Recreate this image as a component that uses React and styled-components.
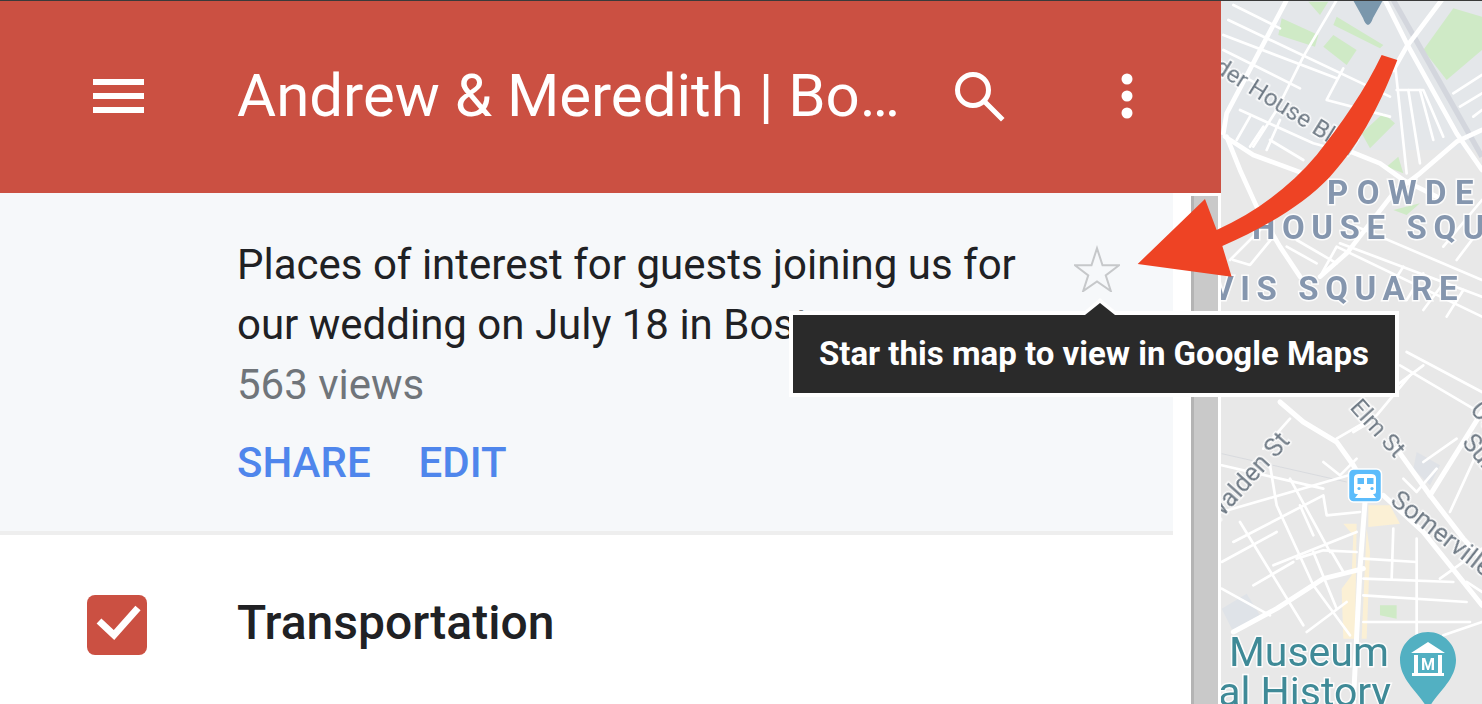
import React from 'react'
import styled, { createGlobalStyle } from 'styled-components'

const Global = createGlobalStyle`
html, body { margin: 0; padding: 0; background: #fff; }
body { font-family: Roboto, "Liberation Sans", sans-serif; overflow: hidden; }
`
const Page = styled.div`
position: relative;
width: 1482px;
height: 704px;
overflow: hidden;
display: flex;
flex-direction: column;
`
const TopLine = styled.div`
height: 1px;
background: #3a3a3a;
flex: none;
`
const Main = styled.div`
flex: 1;
display: flex;
min-height: 0;
`
const Sidebar = styled.div`
width: 1221px;
flex: none;
display: flex;
flex-direction: column;
background: #fff;
`
const Header = styled.div`
height: 192px;
flex: none;
background: #cb5042;
display: flex;
align-items: center;
color: #fff;
`
const MenuButton = styled.div`
width: 51px;
margin-left: 93px;
margin-right: 93px;
margin-top: -2px;
display: flex;
flex-direction: column;
gap: 8px;
span { display: block; height: 6px; background: #fff; }
`
const Title = styled.div`
width: 669px;
font-size: 60px;
line-height: 68px;
white-space: nowrap;
overflow: hidden;
text-overflow: ellipsis;
margin-top: -2px;
`
const SearchIcon = styled.svg`
width: 56px;
height: 56px;
margin-left: 48px;
margin-top: 4px;
flex: none;
`
const MoreIcon = styled.svg`
width: 14px;
height: 50px;
margin-left: 110px;
margin-top: -2px;
flex: none;
`
const Below = styled.div`
flex: 1;
display: flex;
min-height: 0;
`
const Content = styled.div`
width: 1173px;
flex: none;
`
const Details = styled.div`
height: 342px;
box-sizing: border-box;
padding: 42px 0 0 237px;
background: #f6f8fa;
border-bottom: 4px solid #eeeeee;
position: relative;
`
const Description = styled.div`
width: 800px;
font-size: 42px;
line-height: 60px;
color: #202124;
`
const Views = styled.div`
font-size: 42px;
line-height: 60px;
color: #70757a;
`
const Actions = styled.div`
display: flex;
gap: 48px;
margin-top: 18px;
`
const Action = styled.div`
font-size: 42px;
line-height: 60px;
font-weight: 500;
color: #4f86ec;
`
const StarIcon = styled.svg`
position: absolute;
left: 1074px;
top: 52px;
width: 46px;
height: 47px;
`
const LayerRow = styled.div`
display: flex;
align-items: center;
padding-left: 87px;
height: 180px;
`
const Check = styled.div`
width: 60px;
height: 60px;
flex: none;
border-radius: 8px;
background: #cb5042;
margin-right: 90px;
svg { display: block; }
`
const LayerName = styled.div`
font-size: 48px;
font-weight: 500;
color: #202124;
margin-top: -5px;
`
const Scrollbar = styled.div`
margin: 3px 3px 0 18px;
flex: 1;
background: #c9c9c9;
border-left: 3px solid #b4b4b4;
`
const MapPane = styled.div`
flex: 1;
background: #e8e8e8;
min-width: 0;
svg { display: block; }
`
const Blurred = styled.g`
filter: blur(.6px);
`
const ArrowOverlay = styled.svg`
position: absolute;
left: 0;
top: 0;
pointer-events: none;
`
const Tooltip = styled.div`
position: absolute;
left: 789px;
top: 311px;
width: 602px;
height: 78px;
box-sizing: content-box;
border: 4px solid #fff;
background: #2a2a2a;
color: #fff;
font-size: 33px;
font-weight: 700;
line-height: 78px;
text-align: center;
white-space: nowrap;
&::before {
  content: "";
  position: absolute;
  left: 287px;
  top: -17px;
  border: 20px solid transparent;
  border-top: 0;
  border-bottom: 17px solid #fff;
}
&::after {
  content: "";
  position: absolute;
  left: 292px;
  top: -12px;
  border: 15px solid transparent;
  border-top: 0;
  border-bottom: 12px solid #2a2a2a;
}
`
const MapLabel = styled.text`
font-family: Roboto, sans-serif;
font-size: ${p => p.$size || 25}px;
font-weight: ${p => p.$weight || 400};
letter-spacing: ${p => p.$spacing || 0}px;
fill: ${p => p.$color || '#6f7a85'};
stroke: #fff;
stroke-width: ${p => p.$halo ?? 3}px;
stroke-opacity: .85;
paint-order: stroke;
filter: blur(.3px);
`

// road traces, in 3x zoom coordinates of the upper and lower half of the map
const greens = [
  '355,5 415,5 390,45', '275,55 385,105 375,140 265,105', '440,50 580,135 570,145 430,75',
  '400,140 430,105 500,150 470,195', '700,150 790,25 876,50 876,150 770,240',
  '515,400 580,340 615,370 540,445', '590,500 625,470 640,520', '610,630 690,610 650,645'
]
const majorTop = [
  '585,0 650,130 800,400 876,510', '755,0 650,140 610,210', '290,0 110,340 100,400',
  '110,410 150,510 200,620 270,740 330,830', '105,410 190,465 340,520',
  '876,390 800,425 690,520 610,580 470,760 390,830', '470,450 570,490 640,540 740,590'
]
const minorTop = [
  '130,15 270,85', '115,60 600,290', '100,105 440,235', '100,150 330,265', '100,200 200,250',
  '440,0 340,170 260,330 190,440', '460,205 410,300 600,350', '180,350 140,420', '220,380 180,440',
  '270,360 230,450', '150,330 370,430 480,460', '240,420 340,480', '615,190 650,520', '655,270 690,490',
  '690,270 730,420', '620,270 700,270 760,410', '790,280 876,225', '810,320 876,280', '850,350 876,330',
  '120,780 210,690', '130,780 180,795 250,710', '290,740 380,790', '320,720 440,790', '390,830 440,740 876,950',
  '450,730 876,890', '500,680 876,840', '640,800 590,880', '700,820 650,900', '760,850 700,930', '820,870 770,950',
  '876,600 760,740', '876,680 800,780'
]
const majorBottom = [
  '270,150 340,210 440,270 490,340 525,400', '525,450 510,650 490,1056', '580,430 700,540 876,760',
  '620,290 720,430 820,560 876,620', '876,180 720,430', '520,650 400,680 260,770 130,840'
]
const minorBottom = [
  '300,200 220,290', '440,260 560,190 660,70', '400,330 450,370 500,320', '490,240 540,210', '650,0 876,120',
  '630,40 850,170', '620,100 700,40', '800,260 700,330', '640,380 680,420 740,350', '780,480 876,270',
  '95,340 400,410', '95,480 510,360', '130,570 400,430 410,490 510,480', '240,340 260,460 370,700 480,850',
  '300,380 420,600', '330,460 370,550', '150,510 340,820', '95,630 260,540', '250,640 500,540', '320,620 400,595 500,600',
  '370,600 440,770', '425,600 460,660', '95,710 240,790', '190,700 310,630', '350,840 470,750', '520,620 680,630',
  '520,680 790,690', '520,730 830,750', '520,810 840,810', '610,530 605,680', '680,560 680,850', '750,680 876,590',
  '830,690 876,720', '760,850 876,810'
]

const Roads = ({ list, width }) => (
  <g fill="none" stroke="#fff" strokeWidth={width} strokeLinejoin="round" strokeLinecap="round">
    {list.map(p => <polyline key={p} points={p} />)}
  </g>
)

const CityMap = () => (
  <svg width="261" height="703" viewBox="1221 1 261 703">
    <rect x="1221" y="0" width="261" height="150" fill="#e4e7ea" />
    <Blurred transform="translate(1190 0) scale(.3333)">
      {greens.map(p => <polygon key={p} points={p} fill="#cfeac6" />)}
      <polyline points="610,0 876,470" fill="none" stroke="#d3d6dd" strokeWidth="16" />
      <Roads list={minorTop} width={8} />
      <Roads list={majorTop} width={14} />
    </Blurred>
    <Blurred transform="translate(1190 352) scale(.3333)">
      <polygon points="460,515 500,515 495,860 460,860 455,710 485,670 490,550" fill="#fbf0d5" />
      <polygon points="535,460 600,460 630,515 535,525" fill="#fbf0d5" />
      <polygon points="530,530 540,600 530,860 515,860" fill="#fbf0d5" />
      <polygon points="570,760 620,760 620,800 570,790" fill="#cfeac6" />
      <polygon points="680,300 750,340 720,400 670,350" fill="#dfe2e7" />
      <polygon points="95,770 170,725 210,790 130,840" fill="#dfe3e8" />
      <line x1="95" y1="305" x2="470" y2="390" stroke="#d8dade" strokeWidth="3" />
      <Roads list={minorBottom} width={8} />
      <Roads list={majorBottom} width={15} />
    </Blurred>
    <path d="M1353 0h30l-10 18q-2 6-5 7-3-1-5-7z" fill="#7a97ac" />
    <MapLabel x="1327" y="204" $size={33} $weight={700} $spacing={8.4} $color="#8596ae">POWDER</MapLabel>
    <MapLabel x="1252" y="239" $size={33} $weight={700} $spacing={6.6} $color="#8596ae">HOUSE SQUARE</MapLabel>
    <MapLabel x="1157" y="300" $size={33} $weight={700} $spacing={6.6} $color="#8596ae">DAVIS SQUARE</MapLabel>
    <MapLabel transform="translate(1173 46) rotate(32)" $size={24}>Powder House Blvd</MapLabel>
    <MapLabel transform="translate(1216 525) rotate(-48)" $size={25}>Walden St</MapLabel>
    <MapLabel transform="translate(1349 408) rotate(48)" $size={24}>Elm St</MapLabel>
    <MapLabel transform="translate(1389 503) rotate(38)" $size={26}>Somerville Ave</MapLabel>
    <MapLabel transform="translate(1461 443) rotate(50)" $size={25}>Summer</MapLabel>
    <MapLabel transform="translate(1469 410) rotate(50)" $size={25}>Cutter</MapLabel>
    <rect x="1348.5" y="469" width="33" height="33" rx="5" fill="#5cbcfb" stroke="#fff" strokeWidth="1.5" />
    <path d="M1359 474h12q5 0 5 4v14q0 2-2 2h-18q-2 0-2-2v-14q0-4 5-4z" fill="#fff" />
    <rect x="1357.5" y="478" width="6.500" height="6" fill="#5cbcfb" />
    <rect x="1367" y="478" width="6.500" height="6" fill="#5cbcfb" />
    <circle cx="1359" cy="488.500" r="1.600" fill="#5cbcfb" />
    <circle cx="1372" cy="488.500" r="1.600" fill="#5cbcfb" />
    <path d="M1358 494l-3 4h21l-3-4z" fill="#fff" />
    <path d="M1428 632c16 0 28 13 28 28 0 21-21 34-28 50-7-16-28-29-28-50 0-15 12-28 28-28z" fill="#52b0c2" />
    <path d="M1428 642l17 11h-34zM1412 673h32v3h-32zM1414 655h4v18h-4zM1438 655h4v18h-4z" fill="#fff" />
    <MapLabel x="1428" y="670" textAnchor="middle" $size={16} $weight={700} $color="#fff" $halo={0}>M</MapLabel>
    <MapLabel x="1229" y="666" $size={41} $color="#3f8a97">Museum</MapLabel>
    <MapLabel x="1391" y="706" textAnchor="end" $size={41} $color="#3f8a97">Natural History</MapLabel>
  </svg>
)

const App = () => (
  <Page>
    <Global />
    <TopLine />
    <Main>
      <Sidebar>
        <Header>
          <MenuButton><span /><span /><span /></MenuButton>
          <Title>Andrew &amp; Meredith | Boston Wedding</Title>
          <SearchIcon viewBox="0 0 56 56" fill="none" stroke="#fff" strokeWidth="5">
            <circle cx="19" cy="19" r="15.500" />
            <path d="M30 30l17 17" strokeLinecap="square" />
          </SearchIcon>
          <MoreIcon viewBox="0 0 14 50" fill="#fff">
            <circle cx="7" cy="8" r="5.500" />
            <circle cx="7" cy="25" r="5.500" />
            <circle cx="7" cy="42" r="5.500" />
          </MoreIcon>
        </Header>
        <Below>
          <Content>
            <Details>
              <Description>
                Places of interest for guests joining us for our wedding on July 18 in Boston.
              </Description>
              <Views>563 views</Views>
              <Actions>
                <Action>SHARE</Action>
                <Action>EDIT</Action>
              </Actions>
              <StarIcon viewBox="0 0 50 50" fill="none" stroke="#c6c8ca" strokeWidth="2.200">
                <path d="M25 3l6 18.500h18l-14.500 11 5.500 17-15-10.500-15 10.500 5.500-17-14.500-11h18z" />
              </StarIcon>
            </Details>
            <LayerRow>
              <Check>
                <svg width="60" height="60" viewBox="0 0 60 60" fill="none" stroke="#fff" strokeWidth="7">
                  <path d="M12 26l15 14 24-27" />
                </svg>
              </Check>
              <LayerName>Transportation</LayerName>
            </LayerRow>
          </Content>
          <Scrollbar />
        </Below>
      </Sidebar>
      <MapPane><CityMap /></MapPane>
    </Main>
    <ArrowOverlay width="1482" height="704" viewBox="0 0 1482 704">
      <path
        transform="translate(1190 0) scale(.3333)"
        d="M575 165L622 180C575 300 520 420 420 530C340 615 220 685 97 738L125 830L-157 792L45 597L80 690C200 635 300 560 380 465C455 370 525 270 575 165Z"
        fill="#ee4324"
      />
    </ArrowOverlay>
    <Tooltip>Star this map to view in Google Maps</Tooltip>
  </Page>
)

export default App
